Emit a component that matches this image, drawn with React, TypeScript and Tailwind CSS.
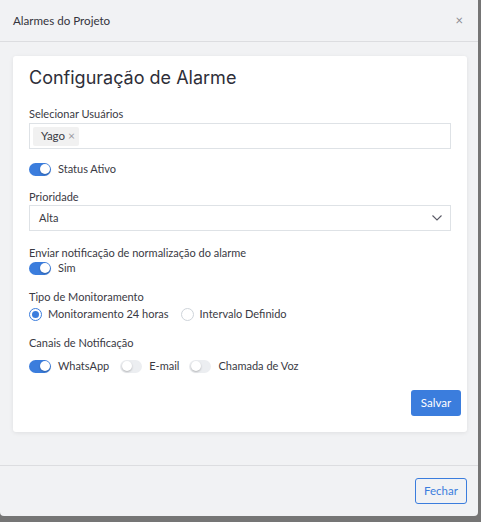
import { useState } from 'react';

function Toggle({ on, onChange }: { on: boolean; onChange: () => void }) {
  return (
    <button
      type="button"
      onClick={onChange}
      className={`relative inline-flex h-[13px] w-[22px] shrink-0 rounded-full ${on ? 'bg-[#3b7ddd]' : 'bg-[#eceef1]'}`}
    >
      <span
        className={`absolute top-[1.5px] h-[10px] w-[10px] rounded-full bg-white shadow-[0_1px_2px_rgba(0,0,0,0.25)] ${on ? 'left-[10.5px]' : 'left-[1.5px]'}`}
      />
    </button>
  );
}

function Radio({ checked, onClick }: { checked: boolean; onClick: () => void }) {
  return (
    <button
      type="button"
      onClick={onClick}
      className={`flex h-[13px] w-[13px] items-center justify-center rounded-full border ${checked ? 'border-[#3b7ddd]' : 'border-[#ced4da]'} bg-white`}
    >
      {checked && <span className="h-[7px] w-[7px] rounded-full bg-[#3b7ddd]" />}
    </button>
  );
}

export default function App() {
  const [ativo, setAtivo] = useState(true);
  const [normalizacao, setNormalizacao] = useState(true);
  const [tipo, setTipo] = useState<'24h' | 'intervalo'>('24h');
  const [canais, setCanais] = useState({ whatsapp: true, email: false, voz: false });

  return (
    <div className="h-[522px] w-[481px] bg-[#757575] font-['Lato',sans-serif] text-[11px] leading-[16px] text-[#3a3a44]">
      <div className="flex h-[516px] w-[478px] flex-col rounded-b-[4px] bg-[#f1f2f4]">
        {/* Header */}
        <div className="flex h-[42px] items-center justify-between border-b border-[#dcdde0] pl-[13px] pr-[15px]">
          <span className="text-[11.6px] text-[#34343c]">Alarmes do Projeto</span>
          <button className="text-[13px] leading-none text-[#8b8b93]">×</button>
        </div>

        {/* Body */}
        <div className="flex-1 pl-[13px] pr-[11px] pt-[14px]">
          <div className="rounded-[3px] bg-white px-[16px] pb-[16px] pt-[10px] shadow-[0_1px_4px_rgba(0,0,0,0.08)]">
            <h2 className="mb-[17px] font-['Inter',sans-serif] text-[18px] font-normal leading-[24px] text-[#2e2e38]">
              Configuração de Alarme
            </h2>

            <label className="block leading-[14px]">Selecionar Usuários</label>
            <div className="mt-[2px] flex h-[26px] items-center border border-[#dee2e6] px-[3px]">
              <span className="flex h-[19px] items-center gap-[3px] rounded-[2px] bg-[#f1f1f1] pl-[8px] pr-[4px] text-[11.5px]">
                Yago <span className="text-[12px] text-[#9a9aa0]">×</span>
              </span>
            </div>

            <div className="mt-[12px] flex items-center gap-[7px]">
              <Toggle on={ativo} onChange={() => setAtivo(!ativo)} />
              <span>Status Ativo</span>
            </div>

            <label className="mt-[13px] block leading-[14px]">Prioridade</label>
            <div className="mt-[1px] flex h-[26px] items-center justify-between border border-[#dee2e6] pl-[9px] pr-[8px]">
              <span>Alta</span>
              <svg width="10" height="6" viewBox="0 0 10 6" fill="none" stroke="#5a5a66" strokeWidth="1.1">
                <path d="M0.5 0.5 L5 5 L9.5 0.5" />
              </svg>
            </div>

            <label className="mt-[15px] block leading-[14px]">Enviar notificação de normalização do alarme</label>
            <div className="flex items-center gap-[7px]">
              <Toggle on={normalizacao} onChange={() => setNormalizacao(!normalizacao)} />
              <span>Sim</span>
            </div>

            <label className="mt-[14px] block leading-[14px]">Tipo de Monitoramento</label>
            <div className="mt-[2px] flex items-center">
              <div className="flex items-center gap-[6px]">
                <Radio checked={tipo === '24h'} onClick={() => setTipo('24h')} />
                <span>Monitoramento 24 horas</span>
              </div>
              <div className="ml-[12px] flex items-center gap-[6px]">
                <Radio checked={tipo === 'intervalo'} onClick={() => setTipo('intervalo')} />
                <span>Intervalo Definido</span>
              </div>
            </div>

            <label className="mt-[14px] block leading-[14px]">Canais de Notificação</label>
            <div className="mt-[8px] flex items-center">
              <div className="flex items-center gap-[7px]">
                <Toggle on={canais.whatsapp} onChange={() => setCanais({ ...canais, whatsapp: !canais.whatsapp })} />
                <span>WhatsApp</span>
              </div>
              <div className="ml-[11px] flex items-center gap-[7px]">
                <Toggle on={canais.email} onChange={() => setCanais({ ...canais, email: !canais.email })} />
                <span>E-mail</span>
              </div>
              <div className="ml-[10px] flex items-center gap-[7px]">
                <Toggle on={canais.voz} onChange={() => setCanais({ ...canais, voz: !canais.voz })} />
                <span>Chamada de Voz</span>
              </div>
            </div>

            <div className="-mr-[10px] mt-[16px] flex justify-end">
              <button className="h-[26px] w-[50px] rounded-[3px] bg-[#3b7ddd] text-[11.5px] text-white">Salvar</button>
            </div>
          </div>
        </div>

        {/* Footer */}
        <div className="flex h-[51px] items-center justify-end border-t border-[#dcdde0] pr-[11px]">
          <button className="h-[26px] w-[52px] rounded-[3px] border border-[#3b7ddd] text-[11.5px] text-[#3b7ddd]">Fechar</button>
        </div>
      </div>
    </div>
  );
}
